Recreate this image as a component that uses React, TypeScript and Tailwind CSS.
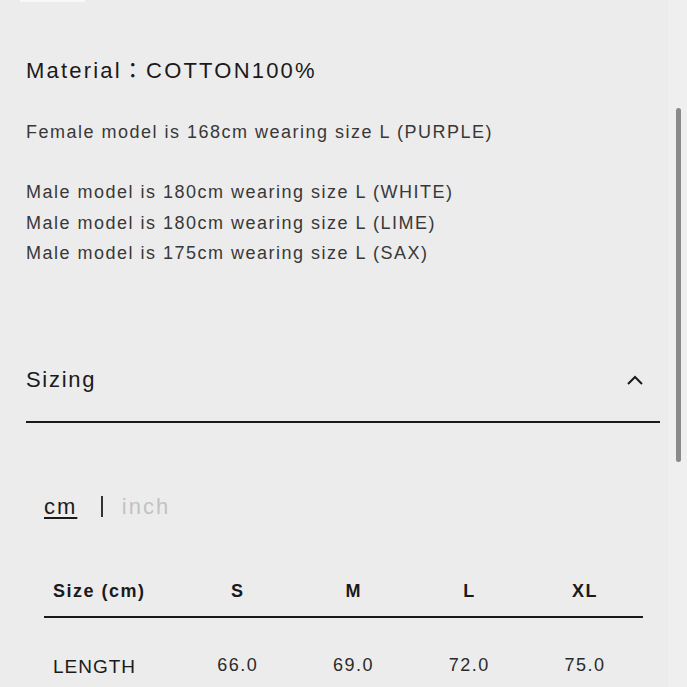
import React from "react";

const sizes = ["S", "M", "L", "XL"];
const rows = [{ name: "LENGTH", values: ["66.0", "69.0", "72.0", "75.0"] }];

const ChevronUp: React.FC = () => (
  <svg width="18" height="12" viewBox="0 0 18 12" fill="none">
    <polyline points="2,10 9,3 16,10" stroke="#1a1a1a" strokeWidth="2" />
  </svg>
);

const App: React.FC = () => {
  return (
    <div
      className="relative w-[687px] h-[687px] overflow-hidden bg-[#ececec]"
      style={{ fontFamily: '"Liberation Sans", "Noto Sans CJK JP", sans-serif' }}
    >
      <div className="ml-[20px] w-[65px] h-[2px] bg-[#f8f8f8]" />

      <div className="pl-[26px]">
        <p className="mt-[58px] text-[22px] leading-[22px] tracking-[2.2px] text-[#1a1a1a]">
          Material：COTTON100%
        </p>

        <div className="mt-[35px] text-[18px] leading-[30.5px] tracking-[1.5px] text-[#383838]">
          <p>Female model is 168cm wearing size L (PURPLE)</p>
          <div className="mt-[29.5px]">
            <p>Male model is 180cm wearing size L (WHITE)</p>
            <p>Male model is 180cm wearing size L (LIME)</p>
            <p>Male model is 175cm wearing size L (SAX)</p>
          </div>
        </div>

        {/* Sizing accordion */}
        <div className="mt-[100px] w-[634px] flex items-center justify-between pb-[30px] border-b-2 border-[#1a1a1a]">
          <span className="text-[22px] leading-[22px] tracking-[1.7px] text-[#1a1a1a]">Sizing</span>
          <span className="mr-[16px]">
            <ChevronUp />
          </span>
        </div>

        <div className="mt-[73px] ml-[18px] flex items-center text-[22px] leading-[22px] tracking-[2px]">
          <span className="text-[#1a1a1a] underline underline-offset-[3px] decoration-[1.5px]">cm</span>
          <span className="ml-[24px] mr-[19px] w-[1.5px] h-[21px] bg-[#333]" />
          <span className="text-[#c2c2c2]">inch</span>
        </div>

        <div className="mt-[63px] ml-[18px] w-[599px]">
          <div className="grid grid-cols-[136px_repeat(4,1fr)] pb-[15px] border-b-2 border-[#1a1a1a] text-[18px] leading-[20px] font-bold tracking-[1.5px] text-[#1a1a1a]">
            <span className="pl-[9px]">Size (cm)</span>
            {sizes.map((s) => (
              <span key={s} className="text-center">
                {s}
              </span>
            ))}
          </div>
          {rows.map((r) => (
            <div key={r.name} className="mt-[37px] grid grid-cols-[136px_repeat(4,1fr)] items-start">
              <span className="pl-[9px] text-[19px] leading-[24px] tracking-[1px] text-[#1a1a1a]">{r.name}</span>
              {r.values.map((v, i) => (
                <span key={i} className="-mt-[2px] text-center text-[18px] leading-[24px] tracking-[1.5px] text-[#2a2a2a]">
                  {v}
                </span>
              ))}
            </div>
          ))}
        </div>
      </div>

      {/* scrollbar */}
      <div className="absolute right-0 top-0 h-full w-[19px] bg-[#efefef]">
        <div className="absolute left-[8px] top-[108px] w-[5px] h-[354px] rounded-full bg-[#8a8a8a]" />
      </div>
    </div>
  );
};

export default App;
